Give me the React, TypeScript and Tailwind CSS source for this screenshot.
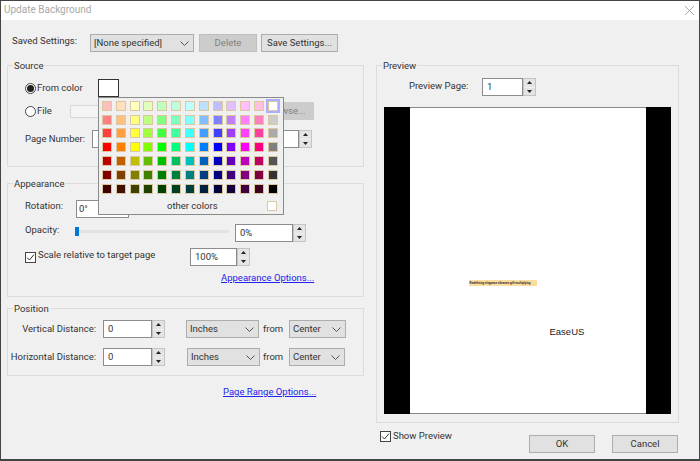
import type { ReactNode } from 'react';

const swatches = [
  ['bg-[#ffbfbf]', 'bg-[#ffdfbf]', 'bg-[#ffffbf]', 'bg-[#dfffbf]', 'bg-[#bfffbf]', 'bg-[#bfffdf]', 'bg-[#bfffff]', 'bg-[#bfdfff]', 'bg-[#bfbfff]', 'bg-[#dfbfff]', 'bg-[#ffbfff]', 'bg-[#ffbfdf]', 'bg-[#ffffff]'],
  ['bg-[#ff8080]', 'bg-[#ffbf80]', 'bg-[#ffff80]', 'bg-[#bfff80]', 'bg-[#80ff80]', 'bg-[#80ffbf]', 'bg-[#80ffff]', 'bg-[#80bfff]', 'bg-[#8080ff]', 'bg-[#bf80ff]', 'bg-[#ff80ff]', 'bg-[#ff80bf]', 'bg-[#cccccc]'],
  ['bg-[#ff4040]', 'bg-[#ff9f40]', 'bg-[#ffff40]', 'bg-[#9fff40]', 'bg-[#40ff40]', 'bg-[#40ff9f]', 'bg-[#40ffff]', 'bg-[#409fff]', 'bg-[#4040ff]', 'bg-[#9f40ff]', 'bg-[#ff40ff]', 'bg-[#ff409f]', 'bg-[#aaaaaa]'],
  ['bg-[#ff0000]', 'bg-[#ff8000]', 'bg-[#ffff00]', 'bg-[#80ff00]', 'bg-[#00ff00]', 'bg-[#00ff80]', 'bg-[#00ffff]', 'bg-[#0080ff]', 'bg-[#0000ff]', 'bg-[#8000ff]', 'bg-[#ff00ff]', 'bg-[#ff0080]', 'bg-[#808080]'],
  ['bg-[#bf0000]', 'bg-[#bf6000]', 'bg-[#bfbf00]', 'bg-[#60bf00]', 'bg-[#00bf00]', 'bg-[#00bf60]', 'bg-[#00bfbf]', 'bg-[#0060bf]', 'bg-[#0000bf]', 'bg-[#6000bf]', 'bg-[#bf00bf]', 'bg-[#bf0060]', 'bg-[#555555]'],
  ['bg-[#800000]', 'bg-[#804000]', 'bg-[#808000]', 'bg-[#408000]', 'bg-[#008000]', 'bg-[#008040]', 'bg-[#008080]', 'bg-[#004080]', 'bg-[#000080]', 'bg-[#400080]', 'bg-[#800080]', 'bg-[#800040]', 'bg-[#333333]'],
  ['bg-[#400000]', 'bg-[#401000]', 'bg-[#404000]', 'bg-[#204000]', 'bg-[#004000]', 'bg-[#004020]', 'bg-[#004040]', 'bg-[#002040]', 'bg-[#000040]', 'bg-[#100040]', 'bg-[#400040]', 'bg-[#400020]', 'bg-[#000000]'],
];

function Group({ title, className, children }: { title: string; className: string; children: ReactNode }) {
  return (
    <div className={`relative border border-[#dcdcdc] ${className}`}>
      <span className="absolute left-[5px] top-[-7px] bg-[#f0f0f0] px-[1px] leading-[14px]">{title}</span>
      {children}
    </div>
  );
}

function Arrow({ up }: { up?: boolean }) {
  return (
    <svg width="5" height="3" viewBox="0 0 5 3" className="fill-[#222]">
      <path d={up ? 'M2.5 0 L5 3 L0 3 Z' : 'M0 0 L5 0 L2.5 3 Z'} />
    </svg>
  );
}

function Spin({ value, className }: { value: string; className: string }) {
  return (
    <div className={`flex h-[18px] shrink-0 ${className}`}>
      <div className="flex-1 border border-[#8c8c8c] bg-white pl-[4px] leading-[15px]">{value}</div>
      <div className="flex w-[13px] flex-col gap-[1px] border border-[#c4c4c4] bg-[#f0f0f0]">
        <div className="flex flex-1 items-center justify-center bg-[#e4e4e4]"><Arrow up /></div>
        <div className="flex flex-1 items-center justify-center bg-[#e4e4e4]"><Arrow /></div>
      </div>
    </div>
  );
}

function Select({ value, className }: { value: string; className: string }) {
  return (
    <div className={`flex h-[18px] shrink-0 items-center justify-between border border-[#adadad] bg-[#e1e1e1] pl-[3px] pr-[4px] ${className}`}>
      <span>{value}</span>
      <svg width="9" height="5" viewBox="0 0 9 5" className="fill-none stroke-[#555]">
        <path d="M0.5 0.5 L4.5 4.5 L8.5 0.5" />
      </svg>
    </div>
  );
}

function Check() {
  return (
    <div className="flex h-[11px] w-[11px] shrink-0 items-center justify-center border border-[#444] bg-white">
      <svg width="9" height="9" viewBox="0 0 9 9" className="fill-none stroke-[#333]">
        <path d="M1 4.5 L3.5 7 L8 1.5" />
      </svg>
    </div>
  );
}

function Radio({ on }: { on?: boolean }) {
  return (
    <div className="flex h-[11px] w-[11px] shrink-0 items-center justify-center rounded-full border border-[#444] bg-white">
      {on && <div className="h-[7px] w-[7px] rounded-full bg-[#222]" />}
    </div>
  );
}

function ColorPopup() {
  return (
    <div className="absolute left-[-1px] top-[17px] z-10 h-[118px] w-[186px] border border-[#8a8a8a] bg-[#f0f0f0] pl-[1px] pt-[1px]">
      <div className="grid w-[180px] grid-cols-[repeat(13,1fr)] auto-rows-[13.8px]">
        {swatches.flat().map((bg, i) => (
          <div key={i} className="flex items-center justify-center">
            <div className={i === 12 ? 'border-2 border-[#aab0ff]' : ''}>
              <div className={`h-[10px] w-[10px] border border-[#dcc8a0] ${bg}`} />
            </div>
          </div>
        ))}
      </div>
      <div className="mt-[4px] flex items-center pl-[67px]">
        <span className="w-[100px] leading-[12px]">other colors</span>
        <div className="h-[10px] w-[10px] border border-[#dcc8a0] bg-white" />
      </div>
    </div>
  );
}

export default function App() {
  return (
    <div className="flex h-[461px] w-[700px] flex-col whitespace-nowrap border border-b-2 border-[#444] bg-[#f0f0f0] text-[9.5px] text-[#333] [font-family:Roboto,'Liberation_Sans',sans-serif]">
      <div className="flex h-[19px] shrink-0 items-center justify-between bg-white pl-[3px] pr-[4px]">
        <span className="-translate-y-[1px] text-[10px] text-[#a8a8a8]">Update Background</span>
        <svg width="11" height="11" viewBox="0 0 11 11" className="fill-none stroke-[#a8a8a8]">
          <path d="M1 1 L10 10 M10 1 L1 10" />
        </svg>
      </div>

      <div className="flex flex-1 pl-[6px] pt-[14px]">
        <div className="w-[357px] shrink-0">
          <div className="flex h-[18px] items-center pl-[5px]">
            <span className="w-[78px] -translate-y-[2px]">Saved Settings:</span>
            <Select value="[None specified]" className="w-[104px]" />
            <div className="ml-[5px] flex h-[18px] w-[58px] items-center justify-center border border-[#bfbfbf] bg-[#cccccc] text-[#808080]">Delete</div>
            <div className="ml-[4px] flex h-[18px] w-[77px] items-center justify-center border border-[#adadad] bg-[#e1e1e1]">Save Settings...</div>
          </div>

          <Group title="Source" className="mt-[13px] h-[102px] pl-[17px] pt-[13px]">
            <div className="flex h-[18px] items-center">
              <Radio on />
              <span className="ml-[1px] w-[61px]">From color</span>
              <div className="relative h-[18px] w-[21px] border border-[#333] bg-white">
                <ColorPopup />
              </div>
            </div>
            <div className="mt-[5px] flex h-[18px] items-center">
              <Radio />
              <span className="ml-[1px] w-[33px]">File</span>
              <div className="h-[13px] w-[185px] border border-[#d8d8d8] bg-[#f4f4f4]" />
              <div className="ml-[3px] flex h-[18px] w-[56px] items-center justify-center bg-[#cccccc] text-[#808080]">Browse...</div>
            </div>
            <div className="mt-[10px] flex h-[18px] items-center">
              <span className="w-[67px]">Page Number:</span>
              <Spin value="1" className="w-[220px]" />
            </div>
          </Group>

          <Group title="Appearance" className="mt-[16px] h-[114px] pl-[17px] pt-[16px]">
            <div className="flex h-[18px] items-center">
              <span className="w-[51px] -translate-y-[3px]">Rotation:</span>
              <div className="h-[18px] w-[53px] border border-[#8c8c8c] bg-white pl-[2px] leading-[16px]">0°</div>
            </div>
            <div className="mt-[6px] flex h-[18px] items-center">
              <span className="w-[50px] -translate-y-[3px]">Opacity:</span>
              <div className="relative h-[3px] w-[154px] -translate-y-[2px] bg-[#e2e2e2]">
                <div className="absolute left-0 top-[-3px] h-[9px] w-[4px] bg-[#0078d7]" />
              </div>
              <Spin value="0%" className="ml-[6px] w-[71px]" />
            </div>
            <div className="mt-[6px] flex h-[18px] items-center">
              <Check />
              <span className="ml-[2px] w-[152px] -translate-y-[2px]">Scale relative to target page</span>
              <Spin value="100%" className="w-[60px]" />
            </div>
            <div className="mt-[6px] pl-[196px] leading-[12px] text-[#2222ee] underline">Appearance Options...</div>
          </Group>

          <Group title="Position" className="mt-[11px] h-[68px] pt-[11px]">
            <div className="flex h-[18px] items-center">
              <span className="w-[88px] text-right">Vertical Distance:</span>
              <Spin value="0" className="ml-[7px] w-[62px]" />
              <Select value="Inches" className="ml-[21px] w-[73px]" />
              <span className="ml-[4px] w-[26px]">from</span>
              <Select value="Center" className="w-[57px]" />
            </div>
            <div className="mt-[10px] flex h-[18px] items-center">
              <span className="w-[88px] text-right">Horizontal Distance:</span>
              <Spin value="0" className="ml-[7px] w-[62px]" />
              <Select value="Inches" className="ml-[22px] w-[73px]" />
              <span className="ml-[3px] w-[26px]">from</span>
              <Select value="Center" className="w-[56px]" />
            </div>
          </Group>

          <div className="mt-[10px] pl-[216px] leading-[12px] text-[#2222ee] underline">Page Range Options...</div>
        </div>

        <div className="ml-[12px] w-[303px] shrink-0">
          <Group title="Preview" className="mt-[31px] h-[358px] px-[7px] pt-[12px]">
            <div className="flex h-[18px] items-center pl-[25px]">
              <span className="w-[73px] -translate-y-[1px]">Preview Page:</span>
              <Spin value="1" className="w-[54px]" />
            </div>
            <div className="mt-[11px] flex h-[307px] w-[287px] justify-center bg-black">
              <div className="relative h-full w-[236px] border-b border-t border-[#888] bg-white">
                <div className="absolute left-[59px] top-[172px] flex h-[6px] w-[68px] items-center whitespace-nowrap bg-[#fddca0] pl-[1px] text-[3px] font-bold leading-none text-[#333]">
                  Redefining elegance vibrance gift multiplying
                </div>
                <span className="absolute left-[140px] top-[217px] text-[9.5px] leading-[14px] text-[#222] [font-family:'Liberation_Sans',sans-serif]">EaseUS</span>
              </div>
            </div>
          </Group>
          <div className="mt-[6px] flex items-start">
            <div className="flex items-center pl-[4px]">
              <Check />
              <span className="ml-[2px]">Show Preview</span>
            </div>
            <div className="ml-[auto] flex gap-[17px] pr-[1px] pt-[6px]">
              <div className="flex h-[18px] w-[66px] items-center justify-center border border-[#adadad] bg-[#e1e1e1]">OK</div>
              <div className="flex h-[18px] w-[66px] items-center justify-center border border-[#adadad] bg-[#e1e1e1]">Cancel</div>
            </div>
          </div>
        </div>
      </div>
    </div>
  );
}
